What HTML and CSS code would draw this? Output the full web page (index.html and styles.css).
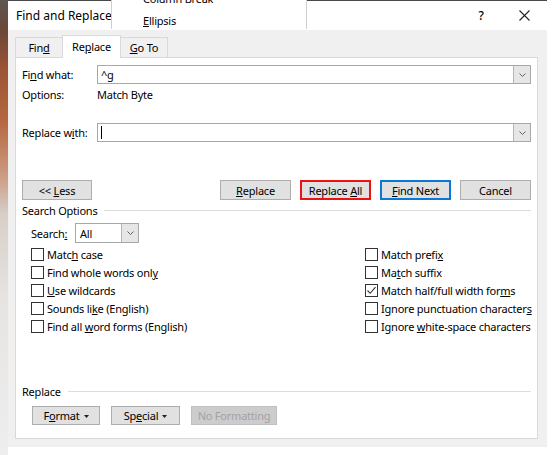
FILE: index.html
```html
<!DOCTYPE html>
<html>
<head>
<meta charset="utf-8">
<title>Find and Replace</title>
<link rel="stylesheet" href="styles.css">
</head>
<body>
<div class="screen">
  <div class="photo"></div>
  <div class="window">
    <div class="titlebar">
      <span class="title">Find and Replace</span>
      <span class="help">?</span>
      <span class="close"><svg width="11" height="11" viewBox="0 0 11 11"><path d="M0.5 0.5 L10.5 10.5 M10.5 0.5 L0.5 10.5" stroke="#222" stroke-width="1.1" fill="none"/></svg></span>
    </div>
    <div class="menu">
      <div class="menu-inner">
        <div class="menu-item">Column Break</div>
        <div class="menu-item"><u>E</u>llipsis</div>
      </div>
    </div>
    <div class="dlg">
      <div class="tabs">
        <div class="tab tab-find"><span>Fin<u>d</u></span></div>
        <div class="tab tab-sel"><span>Re<u>p</u>lace</span></div>
        <div class="tab tab-goto"><span><u>G</u>o To</span></div>
      </div>
      <div class="panel">
        <div class="row row-find">
          <span class="lbl">Fi<u>n</u>d what:</span>
          <div class="combo"><span class="combo-text">^g</span><span class="arrow"><svg width="7" height="4" viewBox="0 0 7 4"><path d="M0.5 0.5 L3.5 3.5 L6.5 0.5" stroke="#606060" fill="none"/></svg></span></div>
        </div>
        <div class="row row-opts">
          <span class="lbl">Options:</span>
          <span>Match Byte</span>
        </div>
        <div class="row row-repl">
          <span class="lbl">Replace w<u>i</u>th:</span>
          <div class="combo"><span class="combo-text"><span class="caret"></span></span><span class="arrow"><svg width="7" height="4" viewBox="0 0 7 4"><path d="M0.5 0.5 L3.5 3.5 L6.5 0.5" stroke="#606060" fill="none"/></svg></span></div>
        </div>
        <div class="btnrow">
          <button class="btn"><span>&lt;&lt; <u>L</u>ess</span></button>
          <div class="btngroup">
            <button class="btn"><span><u>R</u>eplace</span></button>
            <button class="btn btn-red"><span>Replace <u>A</u>ll</span></button>
            <button class="btn btn-blue"><span><u>F</u>ind Next</span></button>
            <button class="btn"><span>Cancel</span></button>
          </div>
        </div>
        <div class="group-head gh-search"><span>Search Options</span><div class="line"></div></div>
        <div class="search-row">
          <span class="search-lbl">Search<u>:</u></span>
          <div class="select"><span class="select-text">All</span><span class="arrow arrow-sel"><svg width="7" height="4" viewBox="0 0 7 4"><path d="M0.5 0.5 L3.5 3.5 L6.5 0.5" stroke="#606060" fill="none"/></svg></span></div>
        </div>
        <div class="checks">
          <div class="col col-left">
            <label class="chk"><span class="box"></span><span>Matc<u>h</u> case</span></label>
            <label class="chk"><span class="box"></span><span>Find whole words onl<u>y</u></span></label>
            <label class="chk"><span class="box"></span><span><u>U</u>se wildcards</span></label>
            <label class="chk"><span class="box"></span><span>Sounds li<u>k</u>e (English)</span></label>
            <label class="chk"><span class="box"></span><span>Find all <u>w</u>ord forms (English)</span></label>
          </div>
          <div class="col col-right">
            <label class="chk"><span class="box"></span><span>Match prefi<u>x</u></span></label>
            <label class="chk"><span class="box"></span><span>Ma<u>t</u>ch suffix</span></label>
            <label class="chk"><span class="box"><svg width="11" height="11" viewBox="0 0 11 11"><path d="M1.5 5.5 L4.2 8.3 L9.5 2.2" stroke="#333" stroke-width="1.1" fill="none"/></svg></span><span>Match half/full width for<u>m</u>s</span></label>
            <label class="chk"><span class="box"></span><span>Ignore punctuation character<u>s</u></span></label>
            <label class="chk"><span class="box"></span><span>Ignore <u>w</u>hite-space characters</span></label>
          </div>
        </div>
        <div class="group-head gh-replace"><span>Replace</span><div class="line"></div></div>
        <div class="fmtrow">
          <button class="btn btn-sm btn-fmt"><span>F<u>o</u>rmat</span><svg class="tri" width="5" height="3" viewBox="0 0 5 3"><path d="M0 0 H5 L2.5 3 Z" fill="#222"/></svg></button>
          <button class="btn btn-sm btn-spec"><span>Sp<u>e</u>cial</span><svg class="tri" width="5" height="3" viewBox="0 0 5 3"><path d="M0 0 H5 L2.5 3 Z" fill="#222"/></svg></button>
          <button class="btn btn-sm btn-dis"><span>No Formatting</span></button>
        </div>
      </div>
    </div>
  </div>
</div>
</body>
</html>
```
FILE: styles.css
```css
html, body {
  margin: 0;
  padding: 0;
  background: #ffffff;
}
body {
  width: 554px;
  height: 455px;
  overflow: hidden;
  font-family: "Noto Sans", "Open Sans", sans-serif;
  font-size: 11px;
  letter-spacing: -0.22px;
  color: #000;
}
u { text-decoration: underline; text-underline-offset: 1px; }
.screen {
  display: flex;
  align-items: flex-start;
}
.photo {
  width: 8px;
  height: 455px;
  background: linear-gradient(to bottom, #5e5650 0px, #6a4838 30px, #9c5434 70px, #b5683f 120px, #c9957a 170px, #d8cfc8 215px, #e6e4e2 300px, #eeeeee 455px);
}
.window {
  position: relative;
  width: 539px;
  height: 447px;
  display: flex;
  flex-direction: column;
}
.titlebar {
  height: 30px;
  box-sizing: border-box;
  background: #fff;
  border-top: 1px solid #4a4a4a;
  display: flex;
  align-items: center;
  padding-left: 8px;
}
.title {
  font-size: 12px;
  letter-spacing: 0;
  flex: 1;
  padding-bottom: 1px;
}
.help {
  font-size: 12px;
  width: 14px;
  text-align: center;
  margin-right: 31px;
  font-weight: 500;
}
.close {
  width: 11px;
  height: 11px;
  margin-right: 17px;
  display: flex;
}
.menu {
  position: absolute;
  left: 103px;
  top: 0;
  width: 196px;
  height: 29px;
  background: #fff;
  border-left: 1px solid #cfcfcf;
  border-right: 1px solid #cfcfcf;
  overflow: hidden;
  box-sizing: border-box;
}
.menu-inner {
  margin-top: -12px;
}
.menu-item {
  height: 22px;
  line-height: 22px;
  padding-left: 31px;
  font-size: 11px;
  white-space: nowrap;
}
.dlg {
  flex: 1;
  background: #f0f0f0;
  padding: 5px 9px 8px 7px;
  display: flex;
  flex-direction: column;
}
.tabs {
  height: 22px;
  display: flex;
  align-items: flex-end;
}
.tab {
  box-sizing: border-box;
  height: 20px;
  border: 1px solid #d9d9d9;
  border-bottom: none;
  background: #f0f0f0;
  display: flex;
  align-items: center;
  justify-content: center;
}
.tab-find { width: 48px; }
.tab-sel {
  width: 59px;
  height: 23px;
  margin-bottom: -1px;
  background: #fff;
  margin-left: -1px;
  position: relative;
  z-index: 2;
  padding-bottom: 2px;
}
.tab-goto { width: 48px; margin-left: -1px; }
.panel {
  height: 382px;
  box-sizing: border-box;
  background: #fff;
  border: 1px solid #d9d9d9;
  padding: 0 6px 0 6px;
  display: flex;
  flex-direction: column;
}
.row {
  display: flex;
  align-items: center;
}
.lbl {
  width: 75px;
  flex: none;
}
.row-find { margin-top: 7px; height: 19px; }
.row-opts { margin-top: 2px; height: 16px; }
.row-repl { margin-top: 21px; height: 19px; }
.combo {
  flex: 1;
  height: 19px;
  box-sizing: border-box;
  border: 1px solid #a8a8a8;
  display: flex;
  align-items: stretch;
}
.combo-text {
  flex: 1;
  padding-left: 3px;
  display: flex;
  align-items: center;
}
.caret {
  width: 1px;
  height: 13px;
  background: #000;
}
.arrow {
  width: 16px;
  background: #e6e6e6;
  border-left: 1px solid #b5b5b5;
  display: flex;
  align-items: center;
  justify-content: center;
}
.btnrow {
  margin-top: 38px;
  display: flex;
  justify-content: space-between;
  height: 20px;
}
.btngroup {
  display: flex;
  gap: 9px;
}
.btn {
  width: 71px;
  height: 20px;
  box-sizing: border-box;
  background: #e1e1e1;
  border: 1px solid #adadad;
  font-family: inherit;
  font-size: 11px;
  letter-spacing: -0.22px;
  color: #000;
  padding: 0;
  margin: 0;
  display: flex;
  align-items: center;
  justify-content: center;
  white-space: nowrap;
}
.btnrow > .btn { width: 70px; }
.btn-red { border: 2px solid #ee1111; }
.btn-blue { border: 2px solid #0a78d4; }
.group-head {
  display: flex;
  align-items: center;
  height: 14px;
  gap: 7px;
}
.group-head .line {
  flex: 1;
  height: 1px;
  background: #dcdcdc;
}
.gh-search { margin-top: 3px; }
.search-row {
  margin-top: 6px;
  height: 20px;
  display: flex;
  align-items: center;
  padding-left: 9px;
}
.search-lbl { width: 44px; }
.select {
  width: 64px;
  height: 20px;
  box-sizing: border-box;
  border: 1px solid #a8a8a8;
  display: flex;
}
.select-text {
  flex: 1;
  padding-left: 4px;
  display: flex;
  align-items: center;
}
.arrow-sel { width: 16px; }
.checks {
  margin-top: 2px;
  display: flex;
  padding-left: 9px;
}
.col {
  display: flex;
  flex-direction: column;
}
.col-left { width: 334px; flex: none; }
.col-right { flex: none; }
.chk {
  height: 18px;
  display: flex;
  align-items: center;
  white-space: nowrap;
}
.box {
  width: 13px;
  height: 13px;
  box-sizing: border-box;
  border: 1px solid #333;
  background: #fff;
  margin-right: 3px;
  flex: none;
  display: flex;
  align-items: center;
  justify-content: center;
}
.gh-replace { margin-top: 49px; }
.fmtrow {
  margin-top: 8px;
  padding-left: 10px;
  display: flex;
  gap: 11px;
}
.btn-sm { height: 19px; }
.btn-fmt { width: 68px; }
.btn-spec { width: 69px; }
.btn-dis {
  width: 86px;
  background: #cccccc;
  border-color: #bfbfbf;
  color: #a3a3a3;
}
.tri { margin-left: 4px; margin-top: 1px; }
```
